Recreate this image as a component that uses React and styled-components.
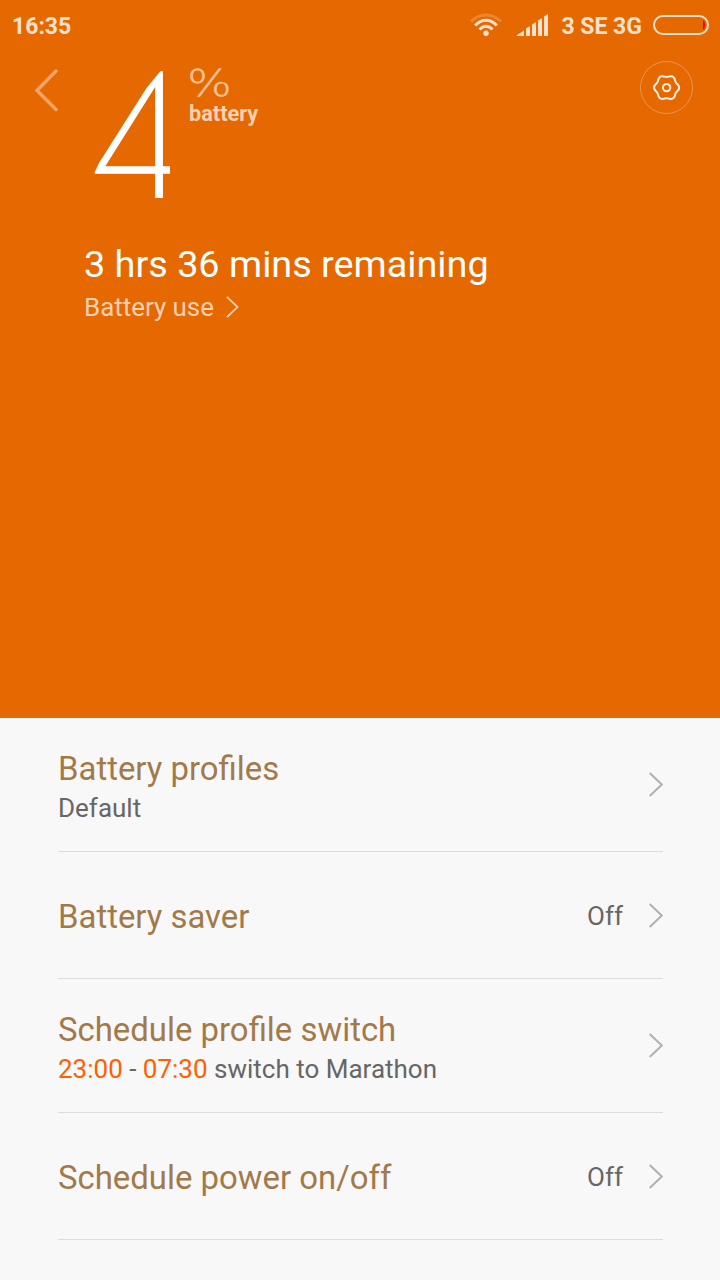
import React from 'react';
import styled, { createGlobalStyle } from 'styled-components';

const GlobalStyle = createGlobalStyle`
  * {
    box-sizing: border-box;
  }
  body {
    margin: 0;
    background: #f8f8f8;
    font-family: Roboto, "Noto Sans", sans-serif;
  }
`
const Screen = styled.div`
  display: flex;
  flex-direction: column;
  width: 720px;
  height: 1280px;
  overflow: hidden;
`
const Hero = styled.section`
  height: 718px;
  background: #e66800;
  color: #fff;
`
const StatusBar = styled.div`
  display: flex;
  justify-content: space-between;
  align-items: center;
  height: 50px;
  padding: 0 11px 0 12px;
  color: #fae1cc;
  font-size: 23px;
  font-weight: 700;
`
const Clock = styled.span`
  padding-top: 2px;
`
const StatusIcons = styled.div`
  display: flex;
  align-items: center;
`
const Carrier = styled.span`
  margin: 0 11px 0 12px;
  padding-top: 2px;
`
const TopRow = styled.header`
  display: flex;
  align-items: flex-start;
  height: 191px;
  padding: 11px 27px 0 34px;
`
const BackButton = styled.button`
  width: 24px;
  height: 44px;
  margin-top: 7px;
  padding: 0;
  border: 0;
  background: none;
`
// the corners of the digit are trimmed to points
const Level = styled.div`
  width: 86px;
  margin-left: 25px;
  font-family: Inter, sans-serif;
  font-size: 177px;
  font-weight: 100;
  line-height: 154px;
  -webkit-text-stroke: 3.5px #fff;
  transform: scaleX(1.025);
  transform-origin: left;
  clip-path: polygon(10.5px 113px, 15.6px 102px, 62px 27px, 76.5px 9px, 85px 9px, 85px 137px, 0 137px, 0 113px);
`
const Unit = styled.div`
  flex: 1;
  margin-left: 20px;
`
const Percent = styled.div`
  width: 36px;
  height: 42px;
  margin-left: -2px;
  color: #f5c399;
  font-family: "DejaVu Sans", sans-serif;
  font-size: 37.5px;
  font-weight: 200;
  line-height: 45px;
  -webkit-text-stroke: .4px #f5c399;
  transform: scaleX(1.26);
  transform-origin: left;
`
const UnitName = styled.div`
  color: #fad2b3;
  font-size: 21.7px;
  font-weight: 700;
  line-height: 22px;
`
const SettingsButton = styled.button`
  display: flex;
  justify-content: center;
  align-items: center;
  width: 53px;
  height: 53px;
  padding: 0;
  border: 1px solid #ee9550;
  border-radius: 50%;
  background: none;
`
const Summary = styled.div`
  padding-left: 84px;
`
const Remaining = styled.div`
  font-size: 37.8px;
  line-height: 46px;
`
const BatteryUse = styled.a`
  display: flex;
  align-items: center;
  gap: 12px;
  color: #fad2b3;
  font-size: 25.9px;
  line-height: 40px;
`
const List = styled.ul`
  margin: 0;
  padding: 0 57px 0 58px;
  list-style: none;
`
const Row = styled.li`
  display: flex;
  align-items: center;
  height: ${props => (props.$tall ? '134px' : '127px')};
  border-bottom: 1px solid #dcdcdc;
`
const RowText = styled.div`
  flex: 1;
  padding-top: ${props => (props.$tall ? '6px' : '4px')};
`
const RowTitle = styled.div`
  color: #a27a4a;
  font-size: 32.9px;
  line-height: 40px;
`
const RowDetail = styled.div`
  color: #666;
  font-size: 26px;
  line-height: 38px;
`
const Time = styled.span`
  color: #ff6000;
`
const RowValue = styled.span`
  margin-right: 26px;
  padding-top: 2px;
  color: #666;
  font-size: 26px;
`

const WifiIcon = styled(({ className }) => (
  <svg className={className} width="32" height="24" viewBox="0 0 32 24" fill="none" stroke="#fae1cc" strokeWidth="3">
    <path d="M1 8.500C9.500 -.3 22.500 -.3 31 8.500" opacity=".25" />
    <path d="M5.200 12.500C11.500 5.500 20.500 5.500 26.800 12.500" />
    <path d="M9.500 16.500C13.500 12 18.500 12 22.500 16.500" />
    <circle cx="16" cy="20.200" r="2.700" fill="#fae1cc" stroke="none" />
  </svg>
))`
  margin-right: 15px;
`

const SignalIcon = () => (
  <svg width="32" height="22" viewBox="0 0 32 22" fill="#fae1cc">
    <path d="M0 22V21L7 16.500V22ZM9 14.500L13 12V22H9ZM15 10.500L19 8V22H15ZM21 6.500L25 4V22H21ZM27 2.500L31 0V22H27Z" />
  </svg>
);

const BatteryIcon = () => (
  <svg width="56" height="20" viewBox="0 0 56 20">
    <rect x="1" y="1" width="54" height="18" rx="9" fill="none" stroke="#fae1cc" strokeWidth="2" />
    <path d="M50 5.500H51Q53 10 51 14.500H50Z" fill="#e60000" />
  </svg>
);

// six soft lobes around the centre
const gearPoints = Array.from({ length: 72 }, (_, i) => {
  const angle = (i * Math.PI) / 36;
  const r = 11.6 + 0.95 * Math.cos(6 * angle);
  return `${(13.6 + r * Math.cos(angle)).toFixed(2)},${(13.6 + r * Math.sin(angle)).toFixed(2)}`;
}).join(' ');

const GearIcon = () => (
  <svg width="28" height="28" viewBox="0 0 28 28" fill="none" stroke="#fdf0e5" strokeWidth="2">
    <polygon points={gearPoints} />
    <circle cx="13.600" cy="13.600" r="3.700" />
  </svg>
);

const Chevron = ({ color, width, height }) => (
  <svg width={width} height={height} viewBox="0 0 14 25" fill="none" stroke={color} strokeWidth="2">
    <path d="M.7 1L12.800 12.500L.7 24" />
  </svg>
);

const rows = [
  { title: 'Battery profiles', detail: 'Default' },
  { title: 'Battery saver', value: 'Off' },
  { title: 'Schedule profile switch', detail: <><Time>23:00</Time> - <Time>07:30</Time> switch to Marathon</> },
  { title: 'Schedule power on/off', value: 'Off' }
];

const App = () => {
  return (
    <Screen>
      <GlobalStyle />
      <Hero>
        <StatusBar>
          <Clock>16:35</Clock>
          <StatusIcons>
            <WifiIcon />
            <SignalIcon />
            <Carrier>3 SE 3G</Carrier>
            <BatteryIcon />
          </StatusIcons>
        </StatusBar>
        <TopRow>
          <BackButton aria-label="Back">
            <svg width="24" height="44" viewBox="0 0 24 44" fill="none" stroke="#f0a466" strokeWidth="3.500" strokeLinecap="round">
              <path d="M22 3L3 22.500L22 41.500" />
            </svg>
          </BackButton>
          <Level>4</Level>
          <Unit>
            <Percent>%</Percent>
            <UnitName>battery</UnitName>
          </Unit>
          <SettingsButton aria-label="Settings">
            <GearIcon />
          </SettingsButton>
        </TopRow>
        <Summary>
          <Remaining>3 hrs 36 mins remaining</Remaining>
          <BatteryUse>
            Battery use
            <Chevron color="#fad2b3" width={13} height={22} />
          </BatteryUse>
        </Summary>
      </Hero>
      <List>
        {rows.map((row) => (
          <Row key={row.title} $tall={!!row.detail}>
            <RowText $tall={!!row.detail}>
              <RowTitle>{row.title}</RowTitle>
              {row.detail && <RowDetail>{row.detail}</RowDetail>}
            </RowText>
            {row.value && <RowValue>{row.value}</RowValue>}
            <Chevron color="#b0b0b0" width={14} height={25} />
          </Row>
        ))}
      </List>
    </Screen>
  );
};

export default App;
